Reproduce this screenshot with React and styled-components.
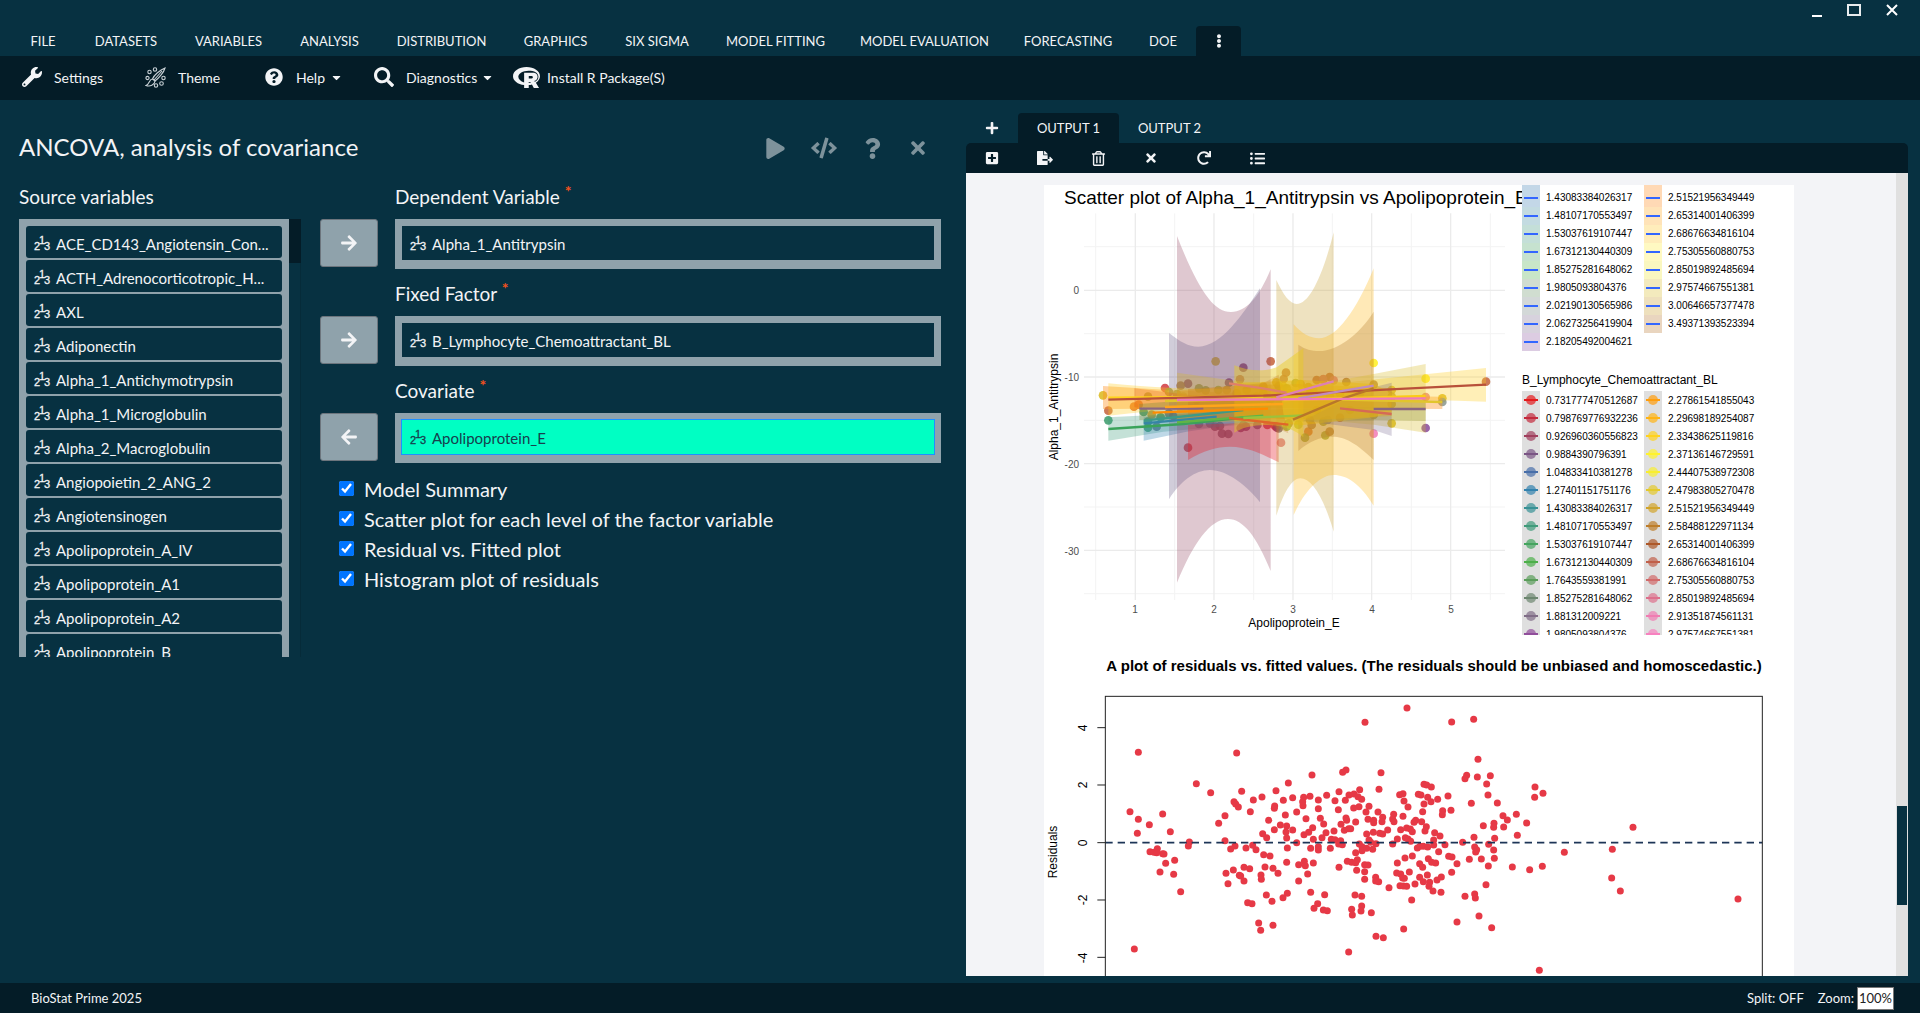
import { useState } from 'react';
import styled, { createGlobalStyle } from 'styled-components';
import {
    FaArrowLeft,
    FaArrowRight,
    FaCaretDown,
    FaCode,
    FaEllipsisV,
    FaFileExport,
    FaListUl,
    FaPlay,
    FaPlus,
    FaPlusSquare,
    FaQuestion,
    FaQuestionCircle,
    FaRedo,
    FaRegTrashAlt,
    FaRProject,
    FaSearch,
    FaTimes,
    FaWrench,
} from 'react-icons/fa';

const GlobalStyle = createGlobalStyle`
    * {
        box-sizing: border-box;
    }
    body {
        margin: 0;
        background: #073141;
        color: #f3f4f6;
        font-family: Lato, sans-serif;
    }
    button, input {
        font-family: inherit;
        color: inherit;
    }
    button {
        background: none;
        border: 0;
        padding: 0;
        cursor: pointer;
    }
    ul {
        list-style: none;
        margin: 0;
        padding: 0;
    }
`;

const Window = styled.div`
    display: flex;
    flex-direction: column;
    height: 100vh;
    overflow: hidden;
`;

const TitleBar = styled.div`
    display: flex;
    justify-content: flex-end;
    gap: 24px;
    height: 26px;
    padding: 4px 21px 0 0;

    button {
        width: 14px;
        height: 13px;
    }
    svg {
        display: block;
    }
`;

const MenuBar = styled.nav`
    display: flex;
    height: 30px;
    padding-left: 10px;
`;

const MenuItem = styled.button`
    display: flex;
    align-items: center;
    justify-content: center;
    width: ${p => p.$w}px;
    font-size: 13px;
    white-space: nowrap;
    border-radius: 4px 4px 0 0;
    background: ${p => (p.$active ? '#041c27' : 'none')};
`;

const ToolBar = styled.div`
    display: flex;
    align-items: center;
    height: 44px;
    padding: 0 0 2px 22px;
    background: #041c27;
`;

const Tool = styled.button`
    display: flex;
    align-items: center;
    gap: ${p => p.$gap || 12}px;
    width: ${p => p.$w}px;
    font-size: 14px;
    white-space: nowrap;
`;

const Caret = styled(FaCaretDown)`
    margin-left: -8px;
    font-size: 13px;
`;

const Body = styled.main`
    flex: 1;
    min-height: 0;
    display: grid;
    grid-template-columns: 966fr 954fr;
`;

const Dialog = styled.section`
    padding: 28px 25px 0 19px;
`;

const DialogHead = styled.header`
    display: flex;
    justify-content: space-between;
    align-items: center;
    height: 40px;
    padding-right: 13px;
`;

const Title = styled.h1`
    margin: 0;
    padding-bottom: 3px;
    font-size: 24px;
    font-weight: 400;
`;

const DialogActions = styled.div`
    display: flex;
    align-items: center;
    gap: 25px;
    color: #7d929b;

    button {
        display: flex;
    }
`;

const DialogBody = styled.div`
    display: grid;
    grid-template-columns: 282px 1fr;
    gap: 19px;
    margin-top: 14px;
`;

const Label = styled.div`
    height: 37px;
    font-size: 19px;
    line-height: 30px;
`;

const Star = styled.sup`
    color: #f4511e;
    font-size: 16px;
    font-weight: 700;
    line-height: 1;
`;

const ListWrap = styled.div`
    display: flex;
    height: 438px;
`;

const SourceList = styled.ul`
    flex: 1;
    min-width: 0;
    display: flex;
    flex-direction: column;
    gap: 2px;
    padding: 7px 7px 0;
    overflow: hidden;
    background: #8fa2ab;
`;

const ListTrack = styled.div`
    width: 12px;
    border-right: 1px solid #062b39;

    &::before {
        content: '';
        display: block;
        width: 12px;
        height: 44px;
        background: #041c27;
    }
`;

const Variable = styled.li`
    flex: none;
    display: flex;
    align-items: center;
    gap: 6px;
    height: ${p => (p.$boxed ? 34 : 32)}px;
    padding: ${p => (p.$boxed ? 1 : 3)}px 8px 0;
    border-radius: ${p => (p.$boxed ? 0 : 3)}px;
    background: #073141;
    font-size: 15px;
    white-space: nowrap;

    svg {
        flex: none;
    }
    ${p => p.$selected && `
        background: #00ffc3;
        color: #17404d;
        outline: 1px solid #1e90ff;
    `}
`;

const Field = styled.div`
    display: grid;
    grid-template-columns: 58px 1fr;
    column-gap: 17px;
    margin-bottom: 10px;

    ${Label} {
        grid-column: 2;
    }
`;

const MoveButton = styled.button`
    display: flex;
    align-items: center;
    justify-content: center;
    height: 48px;
    border: 1px solid #6c757d;
    border-radius: 3px;
    background: #8fa2ab;
    font-size: 18px;
`;

const FieldBox = styled.ul`
    height: 50px;
    padding: 7px;
    background: #8fa2ab;
`;

const Checks = styled.div`
    display: flex;
    flex-direction: column;
    padding: 1px 0 0 19px;
`;

const Check = styled.label`
    display: flex;
    align-items: center;
    gap: 10px;
    height: 30px;
    font-size: 20px;

    input {
        width: 15px;
        height: 15px;
        margin: 0 0 2px;
    }
`;

const Output = styled.section`
    display: flex;
    flex-direction: column;
    min-width: 0;
    min-height: 0;
    padding: 13px 12px 7px 0;
`;

const Tabs = styled.div`
    display: flex;
    height: 30px;
`;

const Tab = styled.button`
    display: flex;
    align-items: center;
    justify-content: center;
    width: ${p => p.$w || 101}px;
    font-size: 13px;
    border-radius: 4px 4px 0 0;
    background: ${p => (p.$active ? '#041c27' : 'none')};
`;

const OutputTools = styled.div`
    display: flex;
    align-items: center;
    gap: 37px;
    height: 30px;
    padding-left: 18px;
    border-radius: 5px 5px 0 0;
    background: #041c27;

    button {
        display: flex;
        justify-content: center;
        width: 16px;
    }
`;

const Viewer = styled.div`
    flex: 1;
    min-height: 0;
    display: flex;
    background: #f3f4f7;
`;

const Sheets = styled.div`
    flex: 1;
    overflow: hidden;
    padding: 12px 24px 0 0;

    svg {
        display: block;
        margin: 0 auto;
        background: #fff;
    }
`;

const Track = styled.div`
    width: 12px;
    padding: 633px 1px 0;
    background: #e0e0e0;

    &::before {
        content: '';
        display: block;
        height: 99px;
        background: #073141;
    }
`;

const StatusBar = styled.footer`
    display: flex;
    align-items: center;
    gap: 14px;
    height: 30px;
    padding: 0 26px 0 31px;
    background: #041c27;
    font-size: 13px;

    button {
        font-size: 13px;
    }
    label {
        display: flex;
        align-items: center;
        gap: 3px;
    }
    input {
        width: 37px;
        height: 23px;
        padding: 0 1px;
        border: 1px solid #777;
        background: #fff;
        color: #222;
        font-size: 13px;
    }
`;

const Spacer = styled.div`
    flex: 1;
`;

const menus = [
    ['FILE', 66], ['DATASETS', 100], ['VARIABLES', 105], ['ANALYSIS', 97],
    ['DISTRIBUTION', 127], ['GRAPHICS', 101], ['SIX SIGMA', 102],
    ['MODEL FITTING', 135], ['MODEL EVALUATION', 163], ['FORECASTING', 124], ['DOE', 66],
];

const variables = [
    'ACE_CD143_Angiotensin_Con...', 'ACTH_Adrenocorticotropic_H...',
    'AXL', 'Adiponectin', 'Alpha_1_Antichymotrypsin', 'Alpha_1_Microglobulin',
    'Alpha_2_Macroglobulin', 'Angiopoietin_2_ANG_2', 'Angiotensinogen',
    'Apolipoprotein_A_IV', 'Apolipoprotein_A1', 'Apolipoprotein_A2', 'Apolipoprotein_B',
];

const fields = [
    { label: 'Dependent Variable', value: 'Alpha_1_Antitrypsin' },
    { label: 'Fixed Factor', value: 'B_Lymphocyte_Chemoattractant_BL' },
    { label: 'Covariate', value: 'Apolipoprotein_E', selected: true },
];

const options = [
    'Model Summary',
    'Scatter plot for each level of the factor variable',
    'Residual vs. Fitted plot',
    'Histogram plot of residuals',
];

// confidence bands, three plot units to the pixel
const bands = [
    ['#3a9a7a', 0.3, 'M235,712 L480,700 L700,690 L1031,680 L1031,722 L700,728 L400,755 L235,782Z'],
    ['#3585b5', 0.32, 'M341,712 L600,690 L700,690 L700,715 L560,742 L470,755 L341,782Z'],
    ['#ff9020', 0.4, 'M219,618 L450,632 L700,642 L1237,650 L1237,687 L700,684 L219,687Z'],
    ['#944862', 0.3, 'M441,168 C505,330 550,396 603,396 C650,396 688,350 722,268 L722,1173 C680,1070 640,1017 594,1017 C540,1017 490,1090 441,1208Z'],
    ['#665884', 0.3, 'M417,459 C450,485 475,500 505,500 C575,500 640,400 690,325 L690,967 C650,915 590,870 540,870 C495,870 450,905 417,958Z'],
    ['#e8202a', 0.35, 'M474,735 L746,725 L746,847 C710,830 660,800 600,800 C560,800 520,812 474,840Z'],
    ['#ffcc20', 0.32, 'M235,610 C500,635 700,632 900,612 L1368,564 L1368,665 C1000,652 700,655 235,707Z'],
    ['#e8601a', 0.3, 'M313,625 L480,645 L640,650 L640,700 L313,682Z'],
    ['#7a8a3a', 0.35, 'M328,672 L600,650 L1187,660 L1187,723 L700,715 L328,720Z'],
    ['#c69e2d', 0.3, 'M739,300 C760,345 780,372 800,372 C840,372 880,280 911,157 L911,1055 C880,950 845,895 811,895 C785,895 760,940 739,1007Z'],
    ['#ffb612', 0.3, 'M791,433 C815,460 840,475 867,475 C920,475 980,390 1031,265 L1031,977 C990,910 950,885 911,885 C870,885 825,930 791,1005Z'],
    ['#b47b2b', 0.3, 'M805,494 C825,508 845,513 868,513 C925,513 990,460 1031,395 L1031,840 C980,790 945,770 907,770 C870,770 835,785 805,813Z'],
    ['#d8b820', 0.3, 'M441,578 L613,602 L820,620 L1031,582 L1187,552 L1187,758 L1031,734 L820,715 L441,732Z'],
    ['#e8cc20', 0.45, 'M613,556 C650,572 700,577 740,562 L820,505 L820,772 C770,725 660,725 613,758Z'],
    ['#665884', 0.25, 'M1000,630 L1031,622 L1085,608 L1085,768 L1031,750 L820,722Z'],
    ['#e0a018', 0.4, 'M441,632 L613,618 L805,612 L1085,625 L1085,708 L805,722 L613,700 L441,700Z'],
    ['#e8b810', 0.45, 'M613,610 L820,600 L1031,612 L1085,640 L1085,695 L1031,712 L820,735 L613,722Z'],
    ['#c87018', 0.25, 'M474,628 L700,610 L746,584 L760,700 L775,760 L690,722 L474,712Z'],
];

const trends = [
    ['#3d9a87', 'M341,722 L640,690'],
    ['#3585a5', 'M341,730 L560,710'],
    ['#3aa35a', 'M235,747 L460,732 L640,713'],
    ['#5fb545', 'M441,727 L700,707'],
    ['#8a6580', 'M328,686 L520,686 M1031,687 H1187'],
    ['#d66a55', 'M930,685 L1085,702'],
    ['#ff8c00', 'M368,698 L714,686'],
    ['#ffa51a', 'M405,681 L760,672'],
    ['#e0652a', 'M597,714 L775,734'],
    ['#ffd21a', 'M235,653 L700,650'],
    ['#e2c52c', 'M405,663 L789,655 L1237,666'],
    ['#fbcb16', 'M760,660 L1187,648'],
    ['#b8513a', 'M235,659 L700,647 L1368,614'],
    ['#9bc23c', 'M640,714 L820,706'],
    ['#e0806a', 'M597,610 L680,622 L770,638'],
    ['#b8762a', 'M789,719 L940,655 L1031,625'],
    ['#c08ac0', 'M805,655 L1031,617'],
    ['#dd80b5', 'M739,652 L911,604'],
    ['#ef79b8', 'M441,660 L1187,655'],
];

const samples = [
    ['#dbb81c', [[219, 646], [557, 544], [1085, 730], [1085, 630], [1237, 655]]],
    ['#c4613a', [[235, 692], [722, 544], [1368, 605], [768, 578], [761, 597], [860, 600], [899, 591], [630, 598]]],
    ['#e0601e', [[312, 680], [326, 674], [930, 713], [640, 735], [835, 755], [700, 620]]],
    ['#d03a40', [[405, 624], [474, 803], [712, 735], [735, 738]]],
    ['#3a9a6a', [[235, 721], [341, 696], [354, 743], [354, 725], [392, 712]]],
    ['#5f6a8c', [[380, 740], [417, 700], [430, 708], [540, 730], [507, 732]]],
    ['#8c9a38', [[354, 650], [507, 625], [527, 631], [417, 636], [746, 618], [797, 609], [825, 773], [886, 766], [880, 725]]],
    ['#8a3a62', [[640, 563], [597, 608], [474, 611], [648, 740], [632, 744], [740, 742]]],
    ['#a8703a', [[452, 617], [840, 640], [949, 606], [899, 755], [845, 735], [840, 720], [880, 598], [1031, 614], [776, 730]]],
    ['#7a5a6a', [[576, 761], [595, 762], [555, 740], [570, 738], [682, 735], [746, 745]]],
    ['#e2b414', [[739, 607], [760, 620], [812, 612], [835, 621], [850, 630], [700, 640], [680, 650], [720, 660], [780, 640], [860, 690], [900, 650], [930, 640], [960, 690], [990, 640]]],
    ['#9fb52c', [[805, 734], [441, 642], [770, 625], [565, 630], [770, 740]]],
    ['#e87c80', [[753, 788], [911, 601], [880, 597], [1187, 651]]],
    ['#f27ab5', [[1031, 761]]],
    ['#fff01e', [[1031, 549], [1187, 596]]],
    ['#8a4a9a', [[1187, 744]]],
    ['#8a968c', [[1237, 666], [893, 720]]],
    ['#c9a02c', [[365, 704], [460, 650], [500, 660], [590, 630], [620, 640], [650, 630], [1031, 705], [1085, 672], [1085, 650]]],
];

const fillKeys = [
    [478, ['#c3d7e7', '#c3dbe1', '#c4dfd8', '#c6e2cf', '#c8e6c8', '#d0ddd0', '#d3d8d8', '#d7d2dd', '#dccce2'],
        ['1.43083384026317', '1.48107170553497', '1.53037619107447', '1.67312130440309', '1.85275281648062', '1.9805093804376', '2.02190130565986', '2.06273256419904', '2.18205492004621']],
    [600, ['#ffd9b5', '#ffe3b8', '#ffedbb', '#fff9c2', '#faf7c0', '#f3eabd', '#eee0bd', '#e9d5bf'],
        ['2.51521956349449', '2.65314001406399', '2.68676634816104', '2.75305560880753', '2.85019892485694', '2.97574667551381', '3.00646657377478', '3.49371393523394']],
];

const pointKeys = [
    [478, ['#e41a1c', '#c32a3c', '#a03e5d', '#7a5584', '#486fa9', '#3282ae', '#389195', '#409a7a', '#45a45f', '#4daf4a', '#5a9d5a', '#6c866f', '#806d87', '#914e9b'],
        ['0.731777470512687', '0.798769776932236', '0.926960360556823', '0.9884390796391', '1.04833410381278', '1.27401151751176', '1.43083384026317', '1.48107170553497', '1.53037619107447', '1.67312130440309', '1.7643559381991', '1.85275281648062', '1.881312009221', '1.9805093804376']],
    [600, ['#ff9d0c', '#ffb314', '#ffd21e', '#fff22c', '#f8ee30', '#e4c92c', '#d1a42b', '#bd7d2a', '#ad5829', '#c0604a', '#d16a6a', '#dd708c', '#f07cb2', '#f781bf'],
        ['2.27861541855043', '2.29698189254087', '2.33438625119816', '2.37136146729591', '2.44407538972308', '2.47983805270478', '2.51521956349449', '2.58488122971134', '2.65314001406399', '2.68676634816104', '2.75305560880753', '2.85019892485694', '2.91351874561131', '2.97574667551381']],
];

// residual points, three plot units to the pixel
const residuals = [
    [325, 337], [620, 339], [499, 431], [542, 458], [635, 454], [300, 515], [325, 538], [398, 522], [358, 554], [322, 580],
    [421, 575], [478, 606], [475, 618], [382, 626], [360, 635], [372, 637], [380, 638], [398, 641], [402, 642], [434, 661],
    [407, 670], [390, 696], [431, 703], [452, 755], [313, 927], [585, 527], [566, 550], [585, 602], [612, 485], [617, 492],
    [625, 501], [670, 480], [696, 471], [661, 515], [738, 452], [775, 429], [846, 405], [760, 481], [788, 473], [734, 498],
    [733, 505], [819, 497], [818, 485], [821, 472], [840, 469], [865, 480], [890, 466], [915, 482], [927, 455], [938, 397],
    [948, 390], [865, 506], [800, 516], [766, 525], [716, 541], [828, 536], [871, 535], [881, 552], [848, 563], [733, 569],
    [751, 555], [770, 558], [768, 576], [788, 570], [770, 594], [698, 581], [710, 593], [800, 608], [822, 584], [836, 577],
    [850, 598], [888, 578], [876, 593], [912, 573], [925, 509], [946, 481], [957, 465], [972, 462], [989, 449], [984, 470],
    [995, 478], [1053, 398], [1047, 448], [1005, 247], [1131, 204], [1265, 246], [1017, 499], [987, 500], [971, 504], [1008, 516],
    [1044, 516], [1058, 532], [948, 534], [933, 553], [950, 541], [977, 546], [943, 571], [956, 566], [962, 566], [1014, 538],
    [1031, 541], [1031, 548], [1056, 545], [1010, 582], [1030, 577], [1049, 580], [1058, 582], [1073, 570], [904, 598], [915, 599],
    [932, 602], [926, 612], [937, 614], [1017, 600], [1022, 607], [1038, 611], [988, 612], [996, 620], [996, 632], [1010, 625],
    [1028, 628], [977, 638], [982, 659], [901, 625], [865, 620], [865, 630], [842, 625], [772, 624], [678, 629], [668, 616],
    [648, 624], [615, 618], [602, 627], [701, 644], [720, 648], [770, 667], [823, 664], [806, 674], [826, 677], [850, 669],
    [705, 681], [729, 685], [744, 700], [693, 705], [694, 718], [659, 686], [642, 682], [610, 690], [588, 700], [628, 706],
    [632, 708], [642, 723], [594, 731], [833, 702], [806, 723], [842, 757], [884, 764], [772, 760], [759, 773], [726, 784],
    [709, 765], [653, 788], [666, 791], [863, 791], [852, 805], [880, 810], [892, 812], [686, 849], [729, 856], [692, 871],
    [927, 682], [952, 664], [965, 667], [977, 668], [980, 691], [1004, 674], [1014, 675], [1004, 695], [1004, 718], [1037, 712],
    [1037, 723], [1046, 725], [1077, 743], [975, 765], [995, 769], [995, 798], [993, 813], [965, 808], [967, 825], [1024, 818],
    [1038, 889], [1060, 893], [956, 936], [1121, 867], [1145, 780], [1109, 464], [1119, 461], [1122, 483], [1134, 501], [1091, 523],
    [1119, 529], [1088, 537], [1092, 545], [1112, 569], [1130, 564], [1141, 567], [1147, 575], [1102, 597], [1126, 593], [1134, 597],
    [1142, 604], [1088, 612], [1125, 654], [1147, 648], [1102, 669], [1138, 696], [1100, 699], [1112, 702], [1118, 714], [1123, 715],
    [1110, 737], [1120, 738], [1130, 739], [1182, 433], [1190, 435], [1204, 441], [1165, 463], [1173, 465], [1193, 472], [1203, 485],
    [1223, 478], [1254, 468], [1182, 492], [1178, 515], [1238, 512], [1263, 511], [1237, 524], [1157, 541], [1152, 547], [1175, 545],
    [1189, 560], [1185, 573], [1214, 578], [1230, 588], [1211, 600], [1211, 615], [1245, 614], [1162, 624], [1170, 619], [1180, 619],
    [1193, 621], [1226, 635], [1256, 649], [1266, 651], [1281, 671], [1195, 656], [1205, 667], [1217, 669], [1169, 671], [1178, 682],
    [1192, 705], [1169, 712], [1180, 725], [1155, 732], [1199, 727], [1197, 739], [1221, 720], [1234, 711], [1209, 753], [1233, 757],
    [1265, 697], [1281, 846], [1298, 607], [1331, 238], [1344, 358], [1310, 406], [1305, 416], [1342, 411], [1381, 407], [1370, 432],
    [1374, 465], [1324, 490], [1402, 489], [1419, 527], [1432, 540], [1421, 561], [1392, 550], [1391, 562], [1360, 557], [1332, 592],
    [1394, 595], [1376, 613], [1334, 621], [1340, 629], [1337, 636], [1391, 630], [1318, 658], [1354, 657], [1393, 655], [1375, 678],
    [1368, 734], [1334, 762], [1336, 774], [1305, 769], [1347, 828], [1385, 863], [1459, 523], [1490, 549], [1462, 586], [1447, 681],
    [1499, 689], [1537, 679], [1515, 441], [1539, 460], [1514, 472], [1603, 637], [1747, 628], [1745, 714], [1771, 753], [1809, 562],
    [2124, 777], [1528, 991],
];

const plotFont = '"Liberation Sans", Arial, sans-serif';

function NumericIcon() {
    return (
        <svg width="16" height="19" viewBox="0 -2 16 19" overflow="visible" fill="currentColor" fontSize="11" fontFamily={plotFont} stroke="currentColor" strokeWidth="0.3" aria-hidden="true">
            <text x="5" y="8">1</text>
            <text x="0" y="14">2</text>
            <text x="10" y="14">3</text>
        </svg>
    );
}

function ThemeIcon() {
    return (
        <svg width="21" height="21" viewBox="0 0 21 21" fill="none" stroke="#c9d1d6" strokeWidth="1.1">
            <path d="M20 1 C15 3 9 8 7.500 12 L10 14 C14 11 19 5 20 1Z M17 4 L9 13" />
            <path d="M7.500 12 C4 12 5 17 1 18.500 C5 20 9.500 18 10 14" />
            <circle cx="4.500" cy="5" r="1.700" />
            <circle cx="10" cy="2.500" r="1.700" />
            <circle cx="2.500" cy="11" r="1.600" />
            <circle cx="18.500" cy="11" r="1.700" />
            <circle cx="16.500" cy="16.500" r="1.800" />
            <circle cx="11" cy="18.500" r="1.700" />
        </svg>
    );
}

function ScatterPlot() {
    return (
        <svg width="750" height="450" fontFamily={plotFont} role="img" aria-label="Scatter plot">
            <g transform="translate(-14 -5) scale(0.33333)" fill="none">
                <g stroke="#f3f3f3" strokeWidth="3">
                    {[197, 434, 671, 907, 1144, 1381].map(x => <path key={x} d={`M${x},100 V1260`} />)}
                    {[200, 461, 721, 981, 1241].map(y => <path key={y} d={`M162,${y} H1425`} />)}
                </g>
                <g stroke="#ebebeb" strokeWidth="4">
                    {[316, 552, 789, 1025, 1262].map(x => <path key={x} d={`M${x},100 V1260`} />)}
                    {[331, 591, 851, 1111].map(y => <path key={y} d={`M162,${y} H1425`} />)}
                </g>
                {samples.map(([color, points]) => (
                    <g key={color} fill={color} fillOpacity="0.85">
                        {points.map(([x, y]) => <circle key={`${x}-${y}`} cx={x} cy={y} r="13" />)}
                    </g>
                ))}
                {bands.map(([color, opacity, d]) => <path key={d} d={d} fill={color} fillOpacity={opacity} />)}
                {trends.map(([color, d]) => <path key={d} d={d} stroke={color} strokeWidth="7" />)}
            </g>
            <g fontSize="10" fill="#4d4d4d">
                {[1, 2, 3, 4, 5].map(n => <text key={n} x={12 + n * 79} y="428" textAnchor="middle">{n}</text>)}
                {[0, -10, -20, -30].map((n, i) => <text key={n} x="35" y={109 + i * 87} textAnchor="end">{n}</text>)}
            </g>
            <text x="250" y="442" fontSize="12" textAnchor="middle">Apolipoprotein_E</text>
            <text transform="translate(14 222) rotate(-90)" fontSize="12" textAnchor="middle">Alpha_1_Antitrypsin</text>
            <text x="20" y="19" fontSize="19">Scatter plot of Alpha_1_Antitrypsin vs Apolipoprotein_E</text>
            {fillKeys.map(([x, colors, labels]) => labels.map((label, i) => (
                <g key={label}>
                    <rect x={x} y={i ? 4 + i * 18 : 0} width="18" height={i ? 18 : 22} fill={colors[i]} />
                    <path d={`M${x + 2},${13 + i * 18} h14`} stroke="#3366ff" strokeWidth="2" />
                    <text x={x + 24} y={16 + i * 18} fontSize="10">{label}</text>
                </g>
            )))}
            <text x="478" y="199" fontSize="12">B_Lymphocyte_Chemoattractant_BL</text>
            {pointKeys.map(([x, colors, labels]) => labels.map((label, i) => (
                <g key={label}>
                    <rect x={x} y={206 + i * 18} width="18" height="18" fill="#dfdfdf" />
                    <circle cx={x + 9} cy={215 + i * 18} r="5" fill={colors[i]} fillOpacity="0.7" />
                    <path d={`M${x + 2},${215 + i * 18} h14`} stroke={colors[i]} strokeWidth="2" />
                    <text x={x + 24} y={219 + i * 18} fontSize="10">{label}</text>
                </g>
            )))}
        </svg>
    );
}

function ResidualPlot() {
    return (
        <svg width="750" height="450" fontFamily={plotFont} role="img" aria-label="Residual plot">
            <text x="390" y="36" fontSize="15" fontWeight="700" textAnchor="middle">
                A plot of residuals vs. fitted values. (The residuals should be unbiased and homoscedastic.)
            </text>
            <g transform="translate(-14 5) scale(0.33333)">
                <g fill="#e63946">
                    {residuals.map(([x, y]) => <circle key={`${x}-${y}`} cx={x} cy={y} r="10.500" />)}
                </g>
                <path d="M226,608 H2197" stroke="#1d3557" strokeWidth="5" strokeDasharray="22 15" />
                <g fill="none" stroke="#222" strokeWidth="3">
                    <rect x="226" y="169" width="1971" height="1080" />
                    {[263, 435, 608, 780, 952].map(y => <path key={y} d={`M202,${y} H226`} />)}
                </g>
            </g>
            <g fontSize="12" textAnchor="middle">
                {[4, 2, 0, -2, -4].map((n, i) => (
                    <text key={n} transform={`translate(43 ${Math.round(93 + i * 57.4)}) rotate(-90)`}>{n}</text>
                ))}
                <text transform="translate(13 217) rotate(-90)">Residuals</text>
            </g>
        </svg>
    );
}

export default function App() {
    const [checked, setChecked] = useState(options.map(() => true));
    const [zoom, setZoom] = useState('100%');

    const toggle = index => setChecked(checked.map((on, i) => (i === index ? !on : on)));

    return (
        <Window>
            <GlobalStyle />
            <TitleBar>
                <button aria-label="Minimize">
                    <svg width="14" height="13"><path d="M3,12 h10" stroke="#fff" strokeWidth="2" /></svg>
                </button>
                <button aria-label="Maximize">
                    <svg width="14" height="13"><rect x="1" y="1" width="12" height="10" fill="none" stroke="#e8ecee" strokeWidth="2" /></svg>
                </button>
                <button aria-label="Close">
                    <svg width="14" height="13"><path d="M2,1 L12,11 M12,1 L2,11" stroke="#fff" strokeWidth="2" /></svg>
                </button>
            </TitleBar>
            <MenuBar>
                {menus.map(([name, w]) => <MenuItem key={name} $w={w}>{name}</MenuItem>)}
                <MenuItem $w={45} $active aria-label="More"><FaEllipsisV size={14} /></MenuItem>
            </MenuBar>
            <ToolBar>
                <Tool $w={123}><FaWrench size={20} />Settings</Tool>
                <Tool $w={120}><ThemeIcon />Theme</Tool>
                <Tool $w={109} $gap={13}><FaQuestionCircle size={18} />Help<Caret /></Tool>
                <Tool $w={139}><FaSearch size={20} />Diagnostics<Caret /></Tool>
                <Tool $w={160} $gap={7}><FaRProject size={27} />Install R Package(S)</Tool>
            </ToolBar>
            <Body>
                <Dialog>
                    <DialogHead>
                        <Title>ANCOVA, analysis of covariance</Title>
                        <DialogActions>
                            <button aria-label="Run"><FaPlay size={21} /></button>
                            <button aria-label="Code"><FaCode size={26} /></button>
                            <button aria-label="Help"><FaQuestion size={21} /></button>
                            <button aria-label="Close"><FaTimes size={20} /></button>
                        </DialogActions>
                    </DialogHead>
                    <DialogBody>
                        <div>
                            <Label>Source variables</Label>
                            <ListWrap>
                                <SourceList>
                                    {variables.map(name => (
                                        <Variable key={name}><NumericIcon />{name}</Variable>
                                    ))}
                                </SourceList>
                                <ListTrack />
                            </ListWrap>
                        </div>
                        <div>
                            {fields.map(({ label, value, selected }) => (
                                <Field key={label}>
                                    <Label>{label} <Star>*</Star></Label>
                                    <MoveButton aria-label={`Move ${label}`}>
                                        {selected ? <FaArrowLeft /> : <FaArrowRight />}
                                    </MoveButton>
                                    <FieldBox>
                                        <Variable $boxed $selected={selected}><NumericIcon />{value}</Variable>
                                    </FieldBox>
                                </Field>
                            ))}
                            <Checks>
                                {options.map((name, i) => (
                                    <Check key={name}>
                                        <input type="checkbox" checked={checked[i]} onChange={() => toggle(i)} />
                                        {name}
                                    </Check>
                                ))}
                            </Checks>
                        </div>
                    </DialogBody>
                </Dialog>
                <Output>
                    <Tabs>
                        <Tab $w={52} aria-label="Add output"><FaPlus size={14} /></Tab>
                        <Tab $active>OUTPUT 1</Tab>
                        <Tab>OUTPUT 2</Tab>
                    </Tabs>
                    <OutputTools>
                        <button aria-label="Add"><FaPlusSquare size={14} /></button>
                        <button aria-label="Export"><FaFileExport size={16} /></button>
                        <button aria-label="Delete"><FaRegTrashAlt size={15} /></button>
                        <button aria-label="Clear"><FaTimes size={14} /></button>
                        <button aria-label="Refresh"><FaRedo size={14} /></button>
                        <button aria-label="List"><FaListUl size={15} /></button>
                    </OutputTools>
                    <Viewer>
                        <Sheets>
                            <ScatterPlot />
                            <ResidualPlot />
                        </Sheets>
                        <Track />
                    </Viewer>
                </Output>
            </Body>
            <StatusBar>
                <span>BioStat Prime 2025</span>
                <Spacer />
                <button>Split: OFF</button>
                <label>Zoom: <input value={zoom} onChange={e => setZoom(e.target.value)} /></label>
            </StatusBar>
        </Window>
    );
}
